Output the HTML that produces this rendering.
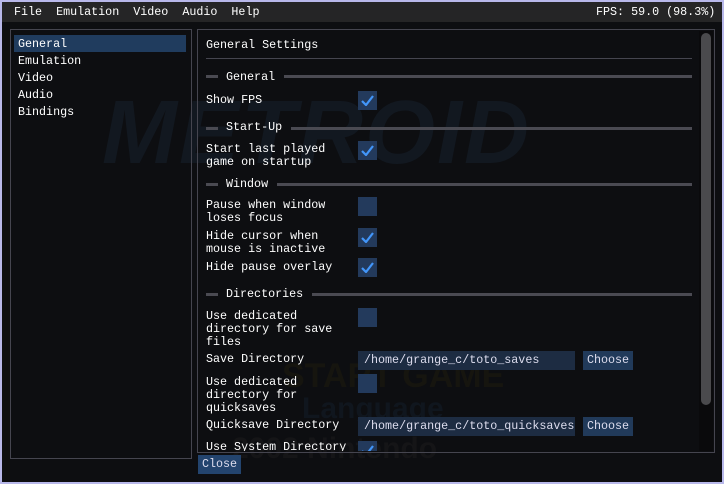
<!DOCTYPE html><html><head><style>
*{margin:0;padding:0;box-sizing:border-box}
body{width:724px;height:484px;background:#b8b8ea;position:relative;overflow:hidden;font-family:"Liberation Mono",monospace;font-size:11.7px;color:#fff}
#main{position:absolute;left:2px;top:2px;width:720px;height:480px;background:#0d0e11;overflow:hidden}
#menu{position:absolute;left:0;top:0;width:720px;height:20px;background:#252526}
.a{position:absolute;white-space:pre;line-height:13px}
.panel{position:absolute;border:1px solid #45454f}
.sel{position:absolute;background:#203c5e}
.cb{position:absolute;width:19px;height:19px;background:#233a5c}
.cb svg{position:absolute;left:3px;top:4px}
.sep{position:absolute;height:3px;background:#4a4a52}
.inp{position:absolute;height:19px;background:#1d2c42;color:#dde;padding-left:6px;line-height:19px;white-space:pre}
.btn{position:absolute;height:19px;background:#213a5a;color:#dde;text-align:center;line-height:19px}
</style></head><body><div id="main">
<div style="position:absolute;left:100px;top:80px;font:bold italic 90px 'Liberation Sans',sans-serif;color:#121820;letter-spacing:2px">METROID</div>
<div style="position:absolute;left:280px;top:355px;font:bold 34px 'Liberation Sans',sans-serif;color:#16150f">START GAME</div>
<div style="position:absolute;left:300px;top:390px;font:bold 30px 'Liberation Sans',sans-serif;color:#10161e">Language</div>
<div style="position:absolute;left:230px;top:430px;font:bold 30px 'Liberation Sans',sans-serif;color:#151517">2002 Nintendo</div>
<div id="menu"></div>
<div class="a" style="left:12px;top:4px">File  Emulation  Video  Audio  Help</div>
<div class="a" style="left:594px;top:4px">FPS: 59.0 (98.3%)</div>
<div class="panel" style="left:8px;top:27px;width:182px;height:430px"></div>
<div class="sel" style="left:12px;top:33px;width:172px;height:17px"></div>
<div class="a" style="left:16px;top:36px">General</div>
<div class="a" style="left:16px;top:53px">Emulation</div>
<div class="a" style="left:16px;top:70px">Video</div>
<div class="a" style="left:16px;top:87px">Audio</div>
<div class="a" style="left:16px;top:104px">Bindings</div>
<div class="panel" style="left:195px;top:27px;width:518px;height:424px;overflow:hidden">
</div>
<div style="position:absolute;left:697px;top:29px;width:14px;height:420px;background:#0a0a0c"></div>
<div style="position:absolute;left:699px;top:31px;width:10px;height:372px;background:#4a4a4d;border-radius:5px"></div>
<div class="a" style="left:204px;top:37px">General Settings</div>
<div style="position:absolute;left:204px;top:56px;width:486px;height:1px;background:#45454f"></div>
<div class="sep" style="left:204px;top:73px;width:12px"></div><div class="a" style="left:224px;top:69px">General</div><div class="sep" style="left:282px;top:73px;width:408px"></div>
<div class="a" style="left:204px;top:92px">Show FPS</div>
<div class="sep" style="left:204px;top:125px;width:12px"></div><div class="a" style="left:224px;top:119px">Start-Up</div><div class="sep" style="left:289px;top:125px;width:401px"></div>
<div class="a" style="left:204px;top:141px">Start last played
game on startup</div>
<div class="sep" style="left:204px;top:181px;width:12px"></div><div class="a" style="left:224px;top:176px">Window</div><div class="sep" style="left:275px;top:181px;width:415px"></div>
<div class="a" style="left:204px;top:197px">Pause when window
loses focus</div>
<div class="a" style="left:204px;top:228px">Hide cursor when
mouse is inactive</div>
<div class="a" style="left:204px;top:259px">Hide pause overlay</div>
<div class="sep" style="left:204px;top:291px;width:12px"></div><div class="a" style="left:224px;top:286px">Directories</div><div class="sep" style="left:310px;top:291px;width:380px"></div>
<div class="a" style="left:204px;top:308px">Use dedicated
directory for save
files</div>
<div class="a" style="left:204px;top:351px">Save Directory</div>
<div class="a" style="left:204px;top:374px">Use dedicated
directory for
quicksaves</div>
<div class="a" style="left:204px;top:417px">Quicksave Directory</div>
<div style="position:absolute;left:196px;top:436px;width:500px;height:13px;overflow:hidden"><div class="a" style="left:8px;top:3px">Use System Directory</div>
<div class="cb" style="left:160px;top:3px"><svg width="13" height="11"><path d="M1 6 L5 10 L12 1" stroke="#4296fa" stroke-width="2.2" fill="none"/></svg></div></div>
<div class="cb" style="left:356px;top:89px"><svg width="13" height="11"><path d="M1 6 L5 10 L12 1" stroke="#4296fa" stroke-width="2.2" fill="none"/></svg></div>
<div class="cb" style="left:356px;top:139px"><svg width="13" height="11"><path d="M1 6 L5 10 L12 1" stroke="#4296fa" stroke-width="2.2" fill="none"/></svg></div>
<div class="cb" style="left:356px;top:195px"></div>
<div class="cb" style="left:356px;top:226px"><svg width="13" height="11"><path d="M1 6 L5 10 L12 1" stroke="#4296fa" stroke-width="2.2" fill="none"/></svg></div>
<div class="cb" style="left:356px;top:256px"><svg width="13" height="11"><path d="M1 6 L5 10 L12 1" stroke="#4296fa" stroke-width="2.2" fill="none"/></svg></div>
<div class="cb" style="left:356px;top:306px"></div>
<div class="inp" style="left:356px;top:349px;width:217px">/home/grange_c/toto_saves</div>
<div class="btn" style="left:581px;top:349px;width:50px">Choose</div>
<div class="cb" style="left:356px;top:372px"></div>
<div class="inp" style="left:356px;top:415px;width:217px">/home/grange_c/toto_quicksaves</div>
<div class="btn" style="left:581px;top:415px;width:50px">Choose</div>
<div class="btn" style="left:196px;top:453px;width:43px;background:#23446e">Close</div>
</div></body></html>
